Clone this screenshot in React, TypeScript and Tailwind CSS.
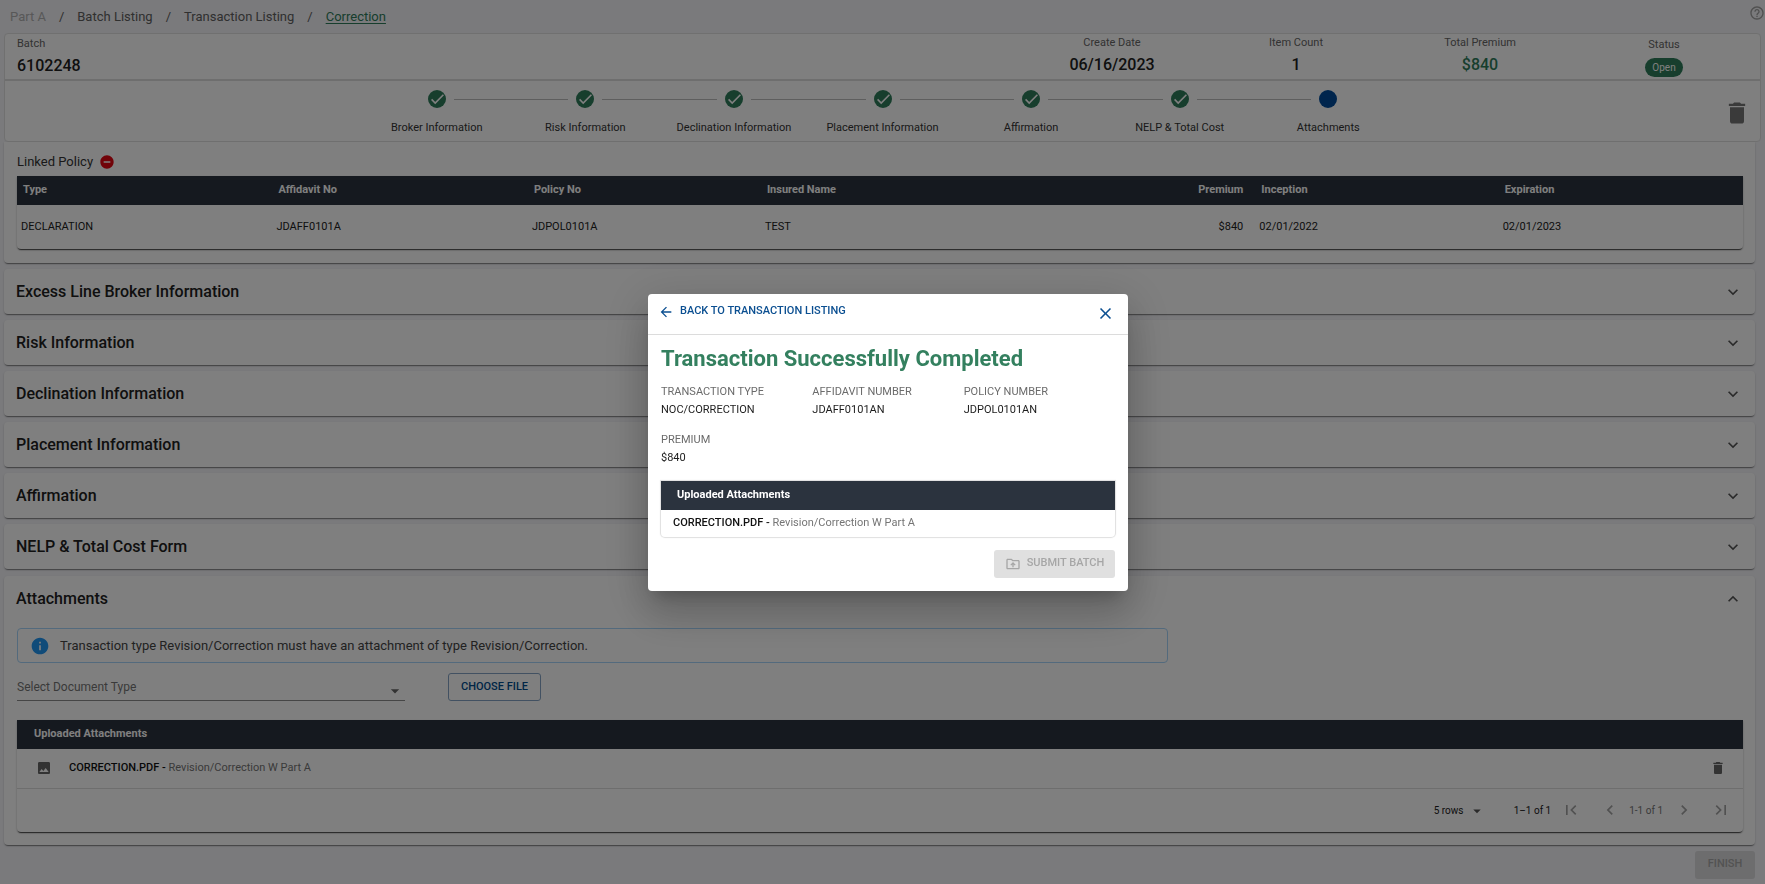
import React, { ReactNode } from "react";
import {
  MdArrowBack,
  MdArrowDropDown,
  MdChevronLeft,
  MdChevronRight,
  MdClose,
  MdDelete,
  MdDone,
  MdExpandLess,
  MdExpandMore,
  MdFirstPage,
  MdHelpOutline,
  MdImage,
  MdInfo,
  MdLastPage,
  MdOutlineDriveFolderUpload,
  MdRemoveCircle,
} from "react-icons/md";

const steps = [
  "Broker Information",
  "Risk Information",
  "Declination Information",
  "Placement Information",
  "Affirmation",
  "NELP & Total Cost",
  "Attachments",
];

const sections = [
  "Excess Line Broker Information",
  "Risk Information",
  "Declination Information",
  "Placement Information",
  "Affirmation",
  "NELP & Total Cost Form",
];

const details = [
  ["TRANSACTION TYPE", "NOC/CORRECTION"],
  ["AFFIDAVIT NUMBER", "JDAFF0101AN"],
  ["POLICY NUMBER", "JDPOL0101AN"],
  ["PREMIUM", "$840"],
];

function Breadcrumbs() {
  return (
    <header className="flex h-8 items-center justify-between pl-[10px] text-[13px] text-[#606060]">
      <nav aria-label="Breadcrumb">
        <ol className="flex items-center gap-[13px]">
          <li className="text-[#b0b0b0]">Part A</li>
          <li aria-hidden="true">/</li>
          <li><a href="#batches">Batch Listing</a></li>
          <li aria-hidden="true">/</li>
          <li><a href="#transactions">Transaction Listing</a></li>
          <li aria-hidden="true">/</li>
          <li><a href="#correction" className="text-[#2e7d5b] underline underline-offset-2">Correction</a></li>
        </ol>
      </nav>
      <button type="button" aria-label="Help" className="mb-2 text-[#a0a0a0]">
        <MdHelpOutline size={16} />
      </button>
    </header>
  );
}

function Stat({ label, children }: { label: string; children: ReactNode }) {
  return (
    <div className="flex w-46 flex-col items-center pt-[3px]">
      <span className="text-[11px] leading-3 text-[#666]">{label}</span>
      <div className="mt-[6px] text-base leading-5 font-medium text-[#212121]">{children}</div>
    </div>
  );
}

function Stepper() {
  return (
    <ol className="flex w-[1040px] pt-1">
      {steps.map((step, i) => {
        const last = i === steps.length - 1;
        return (
          <li key={step} className="flex flex-1 flex-col items-center">
            <div className="flex w-full items-center">
              <span className={i === 0 ? "flex-1" : "h-px flex-1 bg-[#bdbdbd]"} />
              <span
                className={
                  last
                    ? "mx-2 size-[18px] rounded-full bg-[#004b9b]"
                    : "mx-2 flex size-[18px] items-center justify-center rounded-full bg-[#2e7d5b] text-white"
                }
              >
                {!last && (
                  <svg viewBox="0 0 18 18" className="size-[18px]" fill="none" stroke="currentColor" strokeWidth="1.6">
                    <path d="M3.6 9.4 7.2 13 15.4 4.8" />
                  </svg>
                )}
              </span>
              <span className={last ? "flex-1" : "h-px flex-1 bg-[#bdbdbd]"} />
            </div>
            <span className="mt-3 text-[11px] leading-4 text-[#333]">{step}</span>
          </li>
        );
      })}
    </ol>
  );
}

function Summary() {
  return (
    <section className="mx-1 rounded border border-[#e0e0e0] bg-white">
      <div className="flex h-[47px] border-b-2 border-[#dcdcdc]">
        <div className="flex flex-1 flex-col pt-1 pl-3">
          <span className="text-[11px] leading-3 text-[#666]">Batch</span>
          <span className="mt-[6px] text-base leading-5 font-medium text-[#212121]">6102248</span>
        </div>
        <Stat label="Create Date">06/16/2023</Stat>
        <Stat label="Item Count">1</Stat>
        <Stat label="Total Premium"><span className="text-[#2e7d5b]">$840</span></Stat>
        <div className="mr-1 flex w-46 flex-col items-center pt-[5px]">
          <span className="text-[11px] leading-3 text-[#666]">Status</span>
          <span className="mt-[7px] flex h-[19px] items-center rounded-full bg-[#2e7d5b] px-[7px] text-[10px] text-white">
            Open
          </span>
        </div>
      </div>
      <div className="flex h-[60px] items-center">
        <div className="flex-1" />
        <Stepper />
        <div className="flex flex-1 justify-end">
          <button type="button" aria-label="Delete batch" className="mt-1 mr-[9px] text-[#757575]">
            <MdDelete size={28} />
          </button>
        </div>
      </div>
    </section>
  );
}

function LinkedPolicy() {
  return (
    <section className="mr-[10px] ml-1 rounded-b bg-white pt-[11px] pr-3 pb-[14px] pl-[13px] shadow-[0_2px_1px_-1px_rgba(0,0,0,0.35),0_1px_2px_rgba(0,0,0,0.2)]">
      <div className="flex h-[23px] items-center gap-[6px] pb-[6px]">
        <h2 className="text-[13px] leading-4 text-[#333]">Linked Policy</h2>
        <button type="button" aria-label="Remove linked policy" className="text-[#e30613]">
          <MdRemoveCircle size={16} />
        </button>
      </div>
      <div className="rounded-b shadow-[0_2px_1px_-1px_rgba(0,0,0,0.6),0_1px_2px_rgba(0,0,0,0.3)]">
        <table className="w-full table-fixed text-left text-[11px] text-[#212121]">
          <colgroup>
            <col className="w-[14.8%]" />
            <col className="w-[14.8%]" />
            <col className="w-[13.5%]" />
            <col className="w-[20%]" />
            <col className="w-[8.3%]" />
            <col className="w-[14.1%]" />
            <col />
          </colgroup>
          <thead>
            <tr className="h-[29px] bg-[#2b333e] text-white">
              <th className="px-[6px]">Type</th>
              <th className="px-[6px]">Affidavit No</th>
              <th className="px-[6px]">Policy No</th>
              <th className="px-[6px]">Insured Name</th>
              <th className="px-[6px] text-right">Premium</th>
              <th className="px-3">Inception</th>
              <th className="px-3">Expiration</th>
            </tr>
          </thead>
          <tbody>
            <tr className="h-11">
              <td className="px-1">DECLARATION</td>
              <td className="px-1">JDAFF0101A</td>
              <td className="px-1">JDPOL0101A</td>
              <td className="px-1">TEST</td>
              <td className="px-[6px] text-right">$840</td>
              <td className="px-[10px]">02/01/2022</td>
              <td className="px-[10px]">02/01/2023</td>
            </tr>
          </tbody>
        </table>
      </div>
    </section>
  );
}

function Section({ title }: { title: string }) {
  return (
    <section className="rounded bg-white shadow-[0_2px_1px_-1px_rgba(0,0,0,0.35),0_1px_2px_rgba(0,0,0,0.2)]">
      <h2>
        <button type="button" aria-expanded="false" className="flex h-[45px] w-full items-center justify-between px-3">
          <span className="text-base font-medium text-[#212121]">{title}</span>
          <MdExpandMore size={20} className="text-[#555]" />
        </button>
      </h2>
    </section>
  );
}

function Attachments() {
  return (
    <section className="mt-px rounded bg-white pb-[13px] shadow-[0_2px_1px_-1px_rgba(0,0,0,0.35),0_1px_2px_rgba(0,0,0,0.2)]">
      <h2>
        <button type="button" aria-expanded="true" className="flex h-[45px] w-full items-center justify-between px-3">
          <span className="text-base font-medium text-[#212121]">Attachments</span>
          <MdExpandLess size={20} className="text-[#555]" />
        </button>
      </h2>
      <div className="pr-3 pl-[13px]">
        <div role="status" className="mt-[7px] flex h-[35px] w-2/3 items-center gap-[10px] rounded border border-[#a6d5fa] pl-3 text-[13px] text-[#444]">
          <MdInfo size={20} className="text-[#2196f3]" />
          Transaction type Revision/Correction must have an attachment of type Revision/Correction.
        </div>
        <div className="mt-[10px] flex gap-[43px]">
          <div className="relative w-[388px]">
            <select aria-label="Document type" className="h-[28px] w-full appearance-none border-b border-[#8c8c8c] text-xs text-[#757575]">
              <option>Select Document Type</option>
            </select>
            <MdArrowDropDown size={20} className="pointer-events-none absolute top-2 right-0 text-[#666]" />
          </div>
          <button type="button" className="h-[28px] w-[93px] rounded-[3px] border border-[#84a3c4] text-[11px] font-medium text-[#004b8d]">
            CHOOSE FILE
          </button>
        </div>
        <div className="mt-[19px] rounded-b shadow-[0_2px_1px_-1px_rgba(0,0,0,0.6),0_1px_2px_rgba(0,0,0,0.3)]">
          <table className="w-full text-left text-[11px]">
            <thead>
              <tr className="h-[29px] bg-[#2b333e] text-white">
                <th colSpan={2} className="px-[17px]">Uploaded Attachments</th>
              </tr>
            </thead>
            <tbody>
              <tr className="h-[39px] border-b border-[#dcdcdc]">
                <td className="pl-[19px]">
                  <div className="flex items-center gap-[17px]">
                    <MdImage size={16} className="text-[#666]" />
                    <span className="text-[#757575]">
                      <b className="font-medium text-[#111]">CORRECTION.PDF - </b>Revision/Correction W Part A
                    </span>
                  </div>
                </td>
                <td className="pr-[17px] text-right">
                  <button type="button" aria-label="Delete CORRECTION.PDF" className="align-middle text-[#666]">
                    <MdDelete size={16} />
                  </button>
                </td>
              </tr>
            </tbody>
          </table>
          <div className="flex h-[43px] items-center justify-end pr-3 text-[10px] text-[#212121]">
            <div className="relative">
              <select aria-label="Rows per page" className="w-13 appearance-none">
                <option>5 rows</option>
              </select>
              <MdArrowDropDown size={18} className="pointer-events-none absolute -top-px right-0 text-[#555]" />
            </div>
            <span className="ml-7">1–1 of 1</span>
            <button type="button" disabled aria-label="First page" className="ml-[10px] text-[#a3a3a3]"><MdFirstPage size={20} /></button>
            <button type="button" disabled aria-label="Previous page" className="ml-[19px] text-[#a3a3a3]"><MdChevronLeft size={20} /></button>
            <span className="ml-[9px] text-[#757575]">1-1 of 1</span>
            <button type="button" disabled aria-label="Next page" className="ml-[11px] text-[#a3a3a3]"><MdChevronRight size={20} /></button>
            <button type="button" disabled aria-label="Last page" className="ml-[17px] text-[#a3a3a3]"><MdLastPage size={20} /></button>
          </div>
        </div>
      </div>
    </section>
  );
}

function CompletedDialog() {
  return (
    <div className="fixed inset-0 flex items-center justify-center bg-black/50 pl-[11px]">
      <div
        role="dialog"
        aria-modal="true"
        aria-labelledby="dialog-title"
        className="w-[480px] rounded bg-white shadow-[0_11px_15px_-7px_rgba(0,0,0,0.2),0_24px_38px_3px_rgba(0,0,0,0.14),0_9px_46px_8px_rgba(0,0,0,0.12)]"
      >
        <div className="flex h-[41px] justify-between border-b border-[#dcdcdc] pr-[13px] pl-[10px]">
          <a href="#transactions" className="flex h-9 items-center gap-[6px] text-[11px] font-medium text-[#0b4f91]">
            <MdArrowBack size={16} />
            BACK TO TRANSACTION LISTING
          </a>
          <button type="button" aria-label="Close" className="text-[#0b4f91]">
            <MdClose size={19} />
          </button>
        </div>
        <div className="px-[13px] pb-[13px]">
          <h1 id="dialog-title" className="pt-[10px] text-[22px] leading-7 font-bold text-[#34805f]">
            Transaction Successfully Completed
          </h1>
          <dl className="mt-[10px] grid grid-cols-3 gap-y-3 text-[11px] leading-[18px]">
            {details.map(([label, value]) => (
              <div key={label}>
                <dt className="text-[#6b6b6b]">{label}</dt>
                <dd className="text-[#1c1c1c]">{value}</dd>
              </div>
            ))}
          </dl>
          <div className="mt-[14px] rounded-b-sm shadow-[0_0_1px_1px_rgba(0,0,0,0.13)]">
            <table className="w-full text-left text-[11px]">
              <thead>
                <tr className="h-[29px] bg-[#2b333e] text-white">
                  <th className="px-4">Uploaded Attachments</th>
                </tr>
              </thead>
              <tbody>
                <tr className="h-[27px] text-[#757575]">
                  <td className="px-3">
                    <b className="font-medium text-[#111]">CORRECTION.PDF - </b>Revision/Correction W Part A
                  </td>
                </tr>
              </tbody>
            </table>
          </div>
          <div className="mt-[13px] flex justify-end">
            <button type="button" disabled className="flex h-7 w-[121px] items-center justify-center gap-[6px] rounded-[3px] bg-[#e0e0e0] text-[11px] font-medium text-[#a6a6a6]">
              <MdOutlineDriveFolderUpload size={16} />
              SUBMIT BATCH
            </button>
          </div>
        </div>
      </div>
    </div>
  );
}

export default function App() {
  return (
    <div className="min-h-screen bg-[#f4f4f8] pt-px font-[Roboto,sans-serif]">
      <Breadcrumbs />
      <main>
        <Summary />
        <LinkedPolicy />
        <div className="mt-[6px] mr-[10px] ml-1 flex flex-col gap-[6px]">
          {sections.map((title) => (
            <Section key={title} title={title} />
          ))}
          <Attachments />
        </div>
        <div className="mt-[6px] mr-[10px] flex justify-end">
          <button type="button" disabled className="h-7 w-[60px] rounded-[3px] bg-[#dadadc] text-[11px] font-medium text-[#a6a6a6]">
            FINISH
          </button>
        </div>
      </main>
      <CompletedDialog />
    </div>
  );
}
